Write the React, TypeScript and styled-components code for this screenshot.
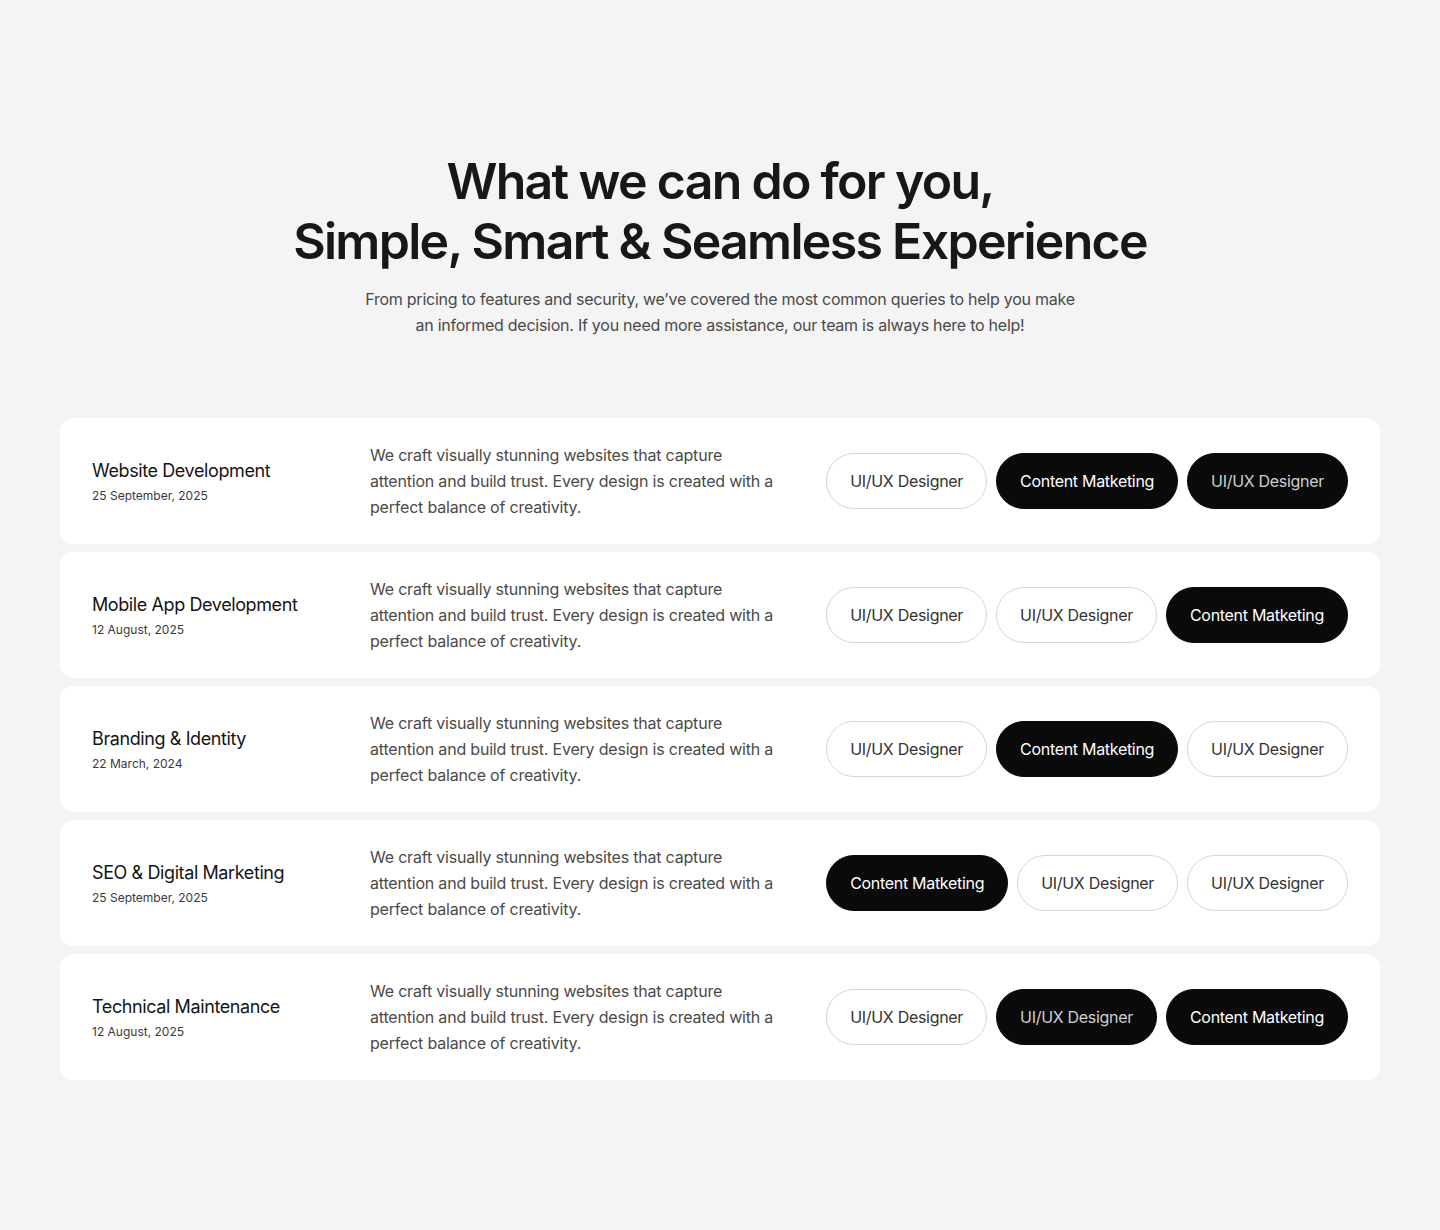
import React from "react";
import styled, { createGlobalStyle } from "styled-components";

const GlobalStyle = createGlobalStyle`
  * { box-sizing: border-box; }
  html, body { margin: 0; padding: 0; }
  body {
    background: #f4f4f4;
    font-family: Inter, "Liberation Sans", Arial, sans-serif;
    color: #161616;
    -webkit-font-smoothing: antialiased;
  }
`;

const Page = styled.main`
  min-height: 1230px;
  padding: 151px 60px 120px;
  display: flex;
  flex-direction: column;
  align-items: center;
`;

const Header = styled.header`
  display: flex;
  flex-direction: column;
  align-items: center;
  text-align: center;
  margin-bottom: 80px;
`;

const Title = styled.h1`
  margin: 0;
  font-size: 50px;
  line-height: 60px;
  font-weight: 600;
  letter-spacing: -1.7px;
  color: #171717;
`;

const Lead = styled.p`
  margin: 15px 0 0;
  max-width: 760px;
  font-size: 16px;
  line-height: 26px;
  color: #4a4a4a;
  letter-spacing: -0.25px;
`;

const List = styled.section`
  width: 100%;
  display: flex;
  flex-direction: column;
  gap: 8px;
`;

const Card = styled.article`
  background: #ffffff;
  border-radius: 14px;
  height: 126px;
  padding: 0 32px;
  display: grid;
  grid-template-columns: 278px 1fr auto;
  align-items: center;
`;

const Meta = styled.div`
  display: flex;
  flex-direction: column;
  gap: 6px;
  padding-top: 2px;
`;

const ServiceName = styled.h3`
  margin: 0;
  font-size: 18px;
  line-height: 22px;
  font-weight: 400;
  letter-spacing: -0.4px;
  color: #151515;
`;

const DateText = styled.span`
  font-size: 12px;
  line-height: 16px;
  color: #3a3a3a;
`;

const Description = styled.p`
  margin: 0;
  max-width: 410px;
  font-size: 16px;
  line-height: 26px;
  color: #4a4a4a;
  letter-spacing: -0.2px;
`;

const Tags = styled.div`
  display: flex;
  gap: 9px;
`;

const Tag = styled.span<{ $dark?: boolean; $muted?: boolean }>`
  height: 56px;
  padding: 0 23px;
  border-radius: 28px;
  display: inline-flex;
  align-items: center;
  justify-content: center;
  font-size: 16px;
  letter-spacing: -0.3px;
  white-space: nowrap;
  border: 1px solid ${(p) => (p.$dark ? "#0a0a0a" : "#d6d6d6")};
  background: ${(p) => (p.$dark ? "#0a0a0a" : "#ffffff")};
  color: ${(p) => (p.$dark ? (p.$muted ? "#cfcfcf" : "#ffffff") : "#333333")};
`;

type TagItem = { label: string; dark?: boolean };

const UX = "UI/UX Designer";
const CM = "Content Matketing";

const services: { name: string; date: string; tags: TagItem[] }[] = [
  {
    name: "Website Development",
    date: "25 September, 2025",
    tags: [{ label: UX }, { label: CM, dark: true }, { label: UX, dark: true }],
  },
  {
    name: "Mobile App Development",
    date: "12 August, 2025",
    tags: [{ label: UX }, { label: UX }, { label: CM, dark: true }],
  },
  {
    name: "Branding & Identity",
    date: "22 March, 2024",
    tags: [{ label: UX }, { label: CM, dark: true }, { label: UX }],
  },
  {
    name: "SEO & Digital Marketing",
    date: "25 September, 2025",
    tags: [{ label: CM, dark: true }, { label: UX }, { label: UX }],
  },
  {
    name: "Technical Maintenance",
    date: "12 August, 2025",
    tags: [{ label: UX }, { label: UX, dark: true }, { label: CM, dark: true }],
  },
];

export default function App() {
  return (
    <>
      <GlobalStyle />
      <Page>
        <Header>
          <Title>
            What we can do for you,
            <br />
            Simple, Smart &amp; Seamless Experience
          </Title>
          <Lead>
            From pricing to features and security, we’ve covered the most common queries to help you make
            <br />
            an informed decision. If you need more assistance, our team is always here to help!
          </Lead>
        </Header>
        <List>
          {services.map((s) => (
            <Card key={s.name}>
              <Meta>
                <ServiceName>{s.name}</ServiceName>
                <DateText>{s.date}</DateText>
              </Meta>
              <Description>
                We craft visually stunning websites that capture attention and build trust. Every design is
                created with a perfect balance of creativity.
              </Description>
              <Tags>
                {s.tags.map((t, i) => (
                  <Tag key={i} $dark={t.dark} $muted={t.dark && t.label === UX}>
                    {t.label}
                  </Tag>
                ))}
              </Tags>
            </Card>
          ))}
        </List>
      </Page>
    </>
  );
}
